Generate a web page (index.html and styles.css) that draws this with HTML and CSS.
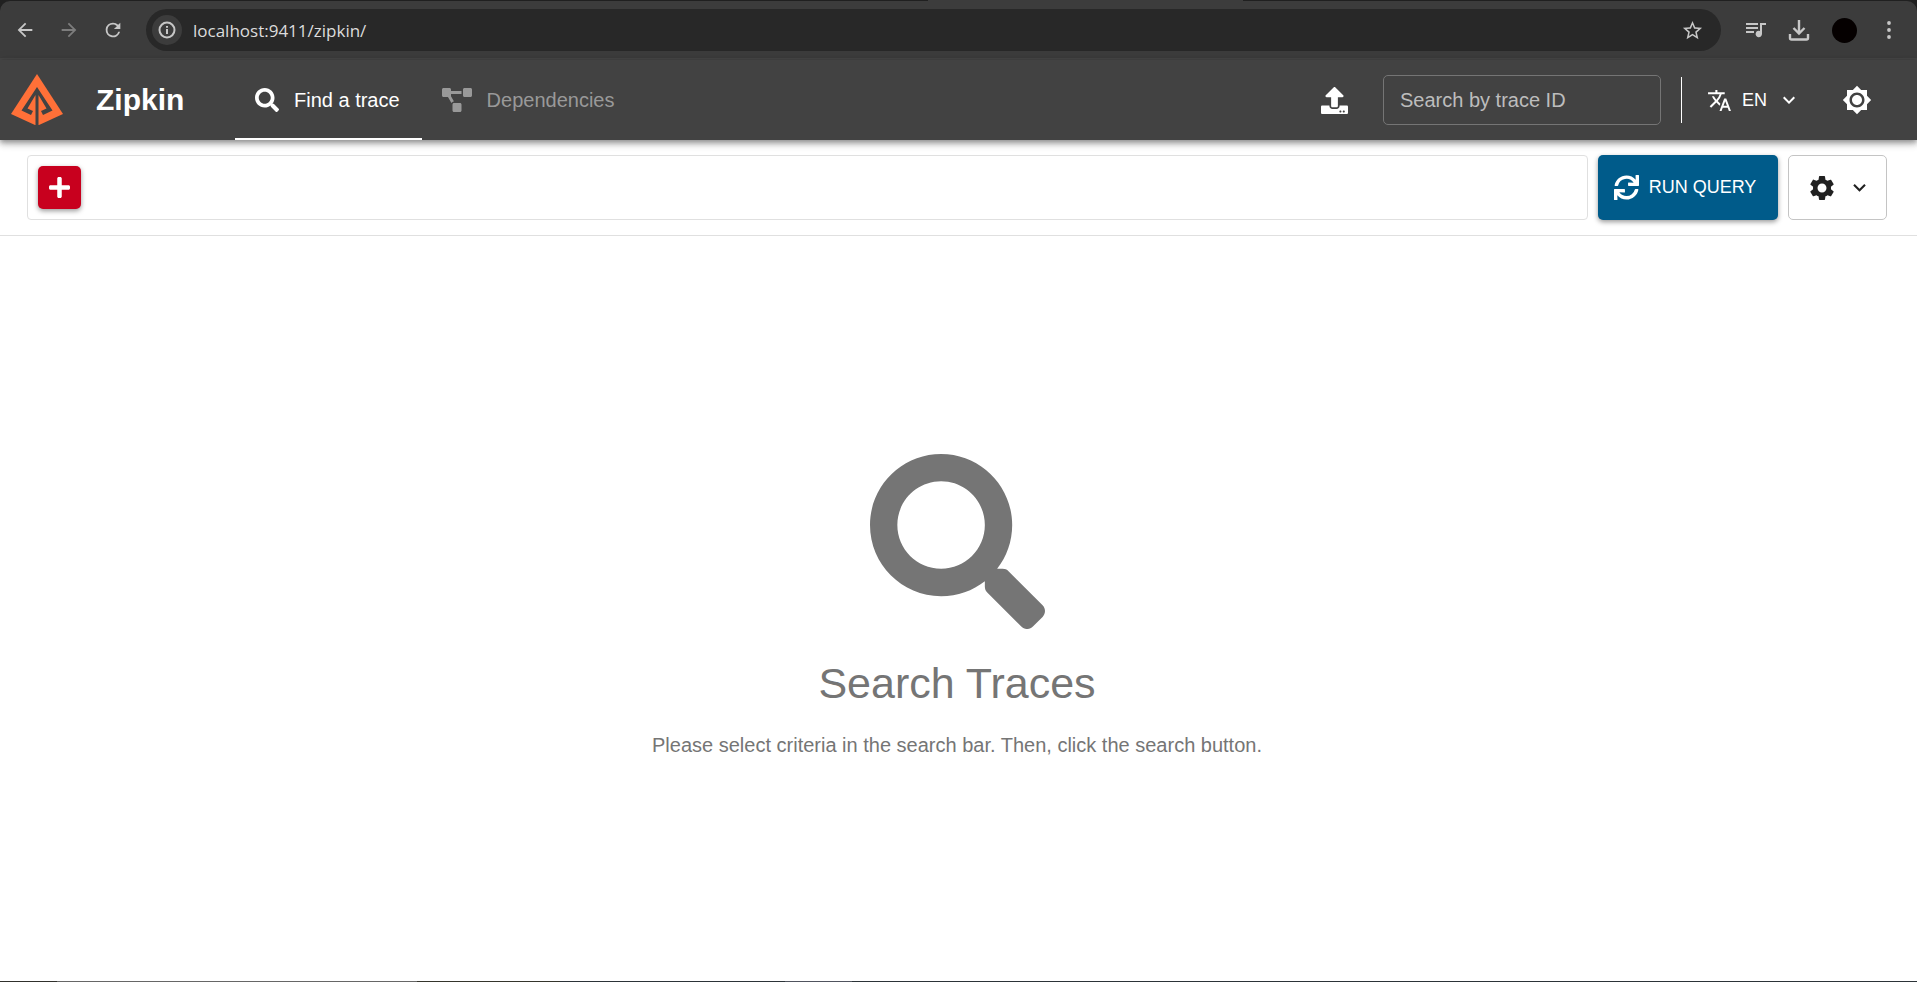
FILE: index.html
```html
<!DOCTYPE html>
<html lang="en">
<head>
<meta charset="utf-8">
<title>Zipkin</title>
<link rel="stylesheet" href="styles.css">
</head>
<body>
<div class="browser">
  <div class="browser-bar">
    <button class="nav-btn" aria-label="Back"><svg width="22" height="22" viewBox="0 0 24 24" fill="currentColor"><path d="M20 11H7.830l5.590-5.590L12 4l-8 8 8 8 1.410-1.410L7.830 13H20z"/></svg></button>
    <button class="nav-btn nav-off" aria-label="Forward"><svg width="22" height="22" viewBox="0 0 24 24" fill="currentColor"><path d="M12 4l-1.410 1.410L16.170 11H4v2h12.170l-5.580 5.590L12 20l8-8z"/></svg></button>
    <button class="nav-btn" aria-label="Reload"><svg width="22" height="22" viewBox="0 0 24 24" fill="currentColor"><path d="M17.650 6.350A7.960 7.960 0 0 0 12 4a8 8 0 1 0 7.730 10h-2.080A6 6 0 1 1 12 6c1.660 0 3.140.69 4.220 1.780L13 11h7V4z"/></svg></button>
    <div class="address">
      <button class="info" aria-label="View site information"><svg width="18" height="18" viewBox="0 0 18 18" fill="none" stroke="currentColor" stroke-width="2"><circle cx="9" cy="9" r="7.500"/><path d="M9 8v5M9 5v1.800"/></svg></button>
      <input class="url" type="text" value="localhost:9411/zipkin/" aria-label="Address">
      <button class="star" aria-label="Bookmark"><svg width="23" height="23" viewBox="0 0 24 24" fill="currentColor"><path d="M22 9.240l-7.190-.62L12 2 9.190 8.630 2 9.240l5.460 4.730L5.820 21 12 17.270 18.180 21l-1.630-7.030zM12 15.400l-3.760 2.270 1-4.280-3.320-2.880 4.380-.38L12 6.100l1.710 4.040 4.380.38-3.320 2.880 1 4.280z"/></svg></button>
    </div>
    <div class="browser-tools">
      <button aria-label="Media"><svg width="20" height="15" viewBox="0 0 20 15" fill="currentColor"><path d="M0 0h12v2H0zM0 4h12v2H0zM0 8h8v2H0zM14 0h6v2h-4v9a3.200 3.200 0 1 1-2-3z"/></svg></button>
      <button aria-label="Downloads"><svg width="22" height="21" viewBox="0 0 22 21" fill="none" stroke="currentColor" stroke-width="2.400"><path d="M11 0v13M5.500 8l5.500 5.500L16.500 8M2 14v4q0 1.500 1.500 1.500h15q1.500 0 1.500-1.500v-4"/></svg></button>
      <button class="profile" aria-label="Profile"></button>
      <button class="menu" aria-label="Menu"><svg width="4" height="18" viewBox="0 0 4 18" fill="currentColor"><circle cx="2" cy="2" r="1.900"/><circle cx="2" cy="9" r="1.900"/><circle cx="2" cy="16" r="1.900"/></svg></button>
    </div>
  </div>
</div>

<header class="app-bar">
  <a class="brand" href="#">
    <svg width="52" height="52" viewBox="0 0 52 52"><path fill="#ff7038" d="M26 0L52 40L28 51H24L0 40Z"/><path fill="#424242" d="M26 13L10.500 36.500L20 41L22 37L16.500 34.500L24.500 21V52H27.500V21L35.500 34.500L30 37L32 41L41.500 36.500Z"/></svg>
    <span class="brand-name">Zipkin</span>
  </a>
  <nav class="tabs">
    <a class="tab tab-active" href="#"><svg width="24" height="24" viewBox="0 0 512 512" fill="currentColor"><path d="M505 442.700L405.300 343c-4.500-4.500-10.600-7-17-7H372c27.600-35.300 44-79.700 44-128C416 93.100 322.900 0 208 0S0 93.100 0 208s93.100 208 208 208c48.300 0 92.700-16.400 128-44v16.300c0 6.400 2.500 12.500 7 17l99.700 99.700c9.400 9.400 24.600 9.400 33.900 0l28.300-28.300c9.400-9.400 9.400-24.600.1-34zM208 336c-70.700 0-128-57.200-128-128 0-70.700 57.200-128 128-128 70.700 0 128 57.200 128 128 0 70.700-57.200 128-128 128z"/></svg>Find a trace</a>
    <a class="tab" href="#"><svg width="30" height="24" viewBox="0 0 640 512" fill="currentColor"><path d="M384 320H256c-17.670 0-32 14.330-32 32v128c0 17.670 14.330 32 32 32h128c17.670 0 32-14.330 32-32V352c0-17.670-14.330-32-32-32zM192 32c0-17.670-14.330-32-32-32H32C14.330 0 0 14.330 0 32v128c0 17.670 14.330 32 32 32h95.720l73.160 128.040C211.980 300.980 232.400 288 256 288h.28L192 175.510V128h224V64H192V32zM608 0H480c-17.670 0-32 14.330-32 32v128c0 17.670 14.330 32 32 32h128c17.670 0 32-14.330 32-32V32c0-17.670-14.330-32-32-32z"/></svg>Dependencies</a>
  </nav>
  <div class="app-tools">
    <button class="upload" aria-label="Upload JSON"><svg width="27" height="27" viewBox="0 0 512 512" fill="currentColor"><path d="M296 384h-80c-13.300 0-24-10.700-24-24V192h-87.700c-17.800 0-26.700-21.500-14.100-34.100L242.300 5.700c7.500-7.500 19.800-7.500 27.300 0l152.200 152.200c12.600 12.600 3.700 34.100-14.100 34.100H320v168c0 13.300-10.700 24-24 24zm216-8v112c0 13.300-10.700 24-24 24H24c-13.300 0-24-10.700-24-24V376c0-13.300 10.700-24 24-24h136v8c0 30.900 25.100 56 56 56h80c30.900 0 56-25.100 56-56v-8h136c13.300 0 24 10.700 24 24zm-124 88c0-11-9-20-20-20s-20 9-20 20 9 20 20 20 20-9 20-20zm64 0c0-11-9-20-20-20s-20 9-20 20 9 20 20 20 20-9 20-20z"/></svg></button>
    <input class="trace-id" type="text" placeholder="Search by trace ID" aria-label="Search by trace ID">
    <div class="divider"></div>
    <button class="language"><svg width="25" height="25" viewBox="0 0 24 24" fill="currentColor"><path d="M12.870 15.070l-2.540-2.510.03-.03A17.520 17.520 0 0 0 14.070 6H17V4h-7V2H8v2H1v1.990h11.170C11.500 7.920 10.440 9.750 9 11.350 8.070 10.320 7.300 9.190 6.690 8h-2c.73 1.630 1.730 3.170 2.980 4.560l-5.090 5.020L4 19l5-5 3.110 3.110.76-2.040zM18.500 10h-2L12 22h2l1.120-3h4.750L21 22h2l-4.500-12zm-2.620 7l1.620-4.330L19.120 17h-3.240z"/></svg><span>EN</span><svg width="24" height="24" viewBox="0 0 24 24" fill="currentColor"><path d="M7.410 8.590L12 13.170l4.590-4.580L18 10l-6 6-6-6z"/></svg></button>
    <button class="theme" aria-label="Toggle theme"><svg width="30" height="30" viewBox="0 0 24 24" fill="currentColor"><path d="M20 8.690V4h-4.690L12 .69 8.690 4H4v4.690L.69 12 4 15.310V20h4.690L12 23.310 15.310 20H20v-4.690L23.310 12 20 8.690zM12 18c-3.310 0-6-2.690-6-6s2.690-6 6-6 6 2.690 6 6-2.690 6-6 6zm0-10c-2.210 0-4 1.790-4 4s1.790 4 4 4 4-1.790 4-4-1.790-4-4-4z"/></svg></button>
  </div>
</header>

<section class="query-bar">
  <div class="criteria">
    <button class="add" aria-label="Add criterion"><svg width="21" height="21" viewBox="0 0 448 448" fill="currentColor"><path d="M416 176H272V32c0-17.670-14.330-32-32-32h-32c-17.670 0-32 14.330-32 32v144H32c-17.670 0-32 14.330-32 32v32c0 17.670 14.330 32 32 32h144v144c0 17.670 14.330 32 32 32h32c17.670 0 32-14.330 32-32V272h144c17.670 0 32-14.330 32-32v-32c0-17.670-14.330-32-32-32z"/></svg></button>
  </div>
  <button class="run"><svg width="25" height="25" viewBox="0 0 512 512" fill="currentColor"><path d="M440.650 12.570l4 82.770A247.160 247.160 0 0 0 255.830 8C134.730 8 33.910 94.920 12.290 209.820A12 12 0 0 0 24.090 224h49.050a12 12 0 0 0 11.670-9.260 175.910 175.910 0 0 1 317-56.940l-101.460-4.860a12 12 0 0 0-12.570 12v47.410a12 12 0 0 0 12 12H500a12 12 0 0 0 12-12V12a12 12 0 0 0-12-12h-47.370a12 12 0 0 0-11.980 12.570zM255.830 432a175.610 175.610 0 0 1-146-77.800l101.800 4.870a12 12 0 0 0 12.570-12v-47.400a12 12 0 0 0-12-12H12a12 12 0 0 0-12 12V500a12 12 0 0 0 12 12h47.350a12 12 0 0 0 12-12.600l-4.150-82.570A247.170 247.170 0 0 0 255.830 504c121.110 0 221.930-86.920 243.550-201.820a12 12 0 0 0-11.800-14.180h-49.050a12 12 0 0 0-11.670 9.260A175.860 175.860 0 0 1 255.830 432z"/></svg>RUN QUERY</button>
  <button class="settings" aria-label="Settings"><svg width="30" height="30" viewBox="0 0 24 24" fill="currentColor"><path d="M19.140 12.940c.04-.3.060-.61.060-.94 0-.32-.02-.64-.07-.94l2.030-1.580c.18-.14.23-.41.120-.61l-1.920-3.320c-.12-.22-.37-.29-.59-.22l-2.390.96c-.5-.38-1.030-.7-1.620-.94l-.36-2.540c-.04-.24-.24-.41-.48-.41h-3.840c-.24 0-.43.17-.47.41l-.36 2.540c-.59.24-1.130.57-1.620.94l-2.390-.96c-.22-.08-.47 0-.59.22L2.740 8.870c-.12.21-.08.47.12.61l2.030 1.580c-.05.3-.09.63-.09.94s.02.64.07.94l-2.030 1.580c-.18.14-.23.41-.12.61l1.920 3.320c.12.22.37.29.59.22l2.390-.96c.5.38 1.030.7 1.620.94l.36 2.540c.05.24.24.41.48.41h3.840c.24 0 .44-.17.47-.41l.36-2.540c.59-.24 1.130-.56 1.620-.94l2.390.96c.22.08.47 0 .59-.22l1.920-3.320c.12-.22.070-.47-.12-.61l-2.010-1.580zM12 15.600c-1.980 0-3.600-1.620-3.600-3.600s1.620-3.600 3.600-3.600 3.600 1.620 3.600 3.600-1.620 3.600-3.600 3.600z"/></svg><svg width="25" height="25" viewBox="0 0 24 24" fill="currentColor"><path d="M7.410 8.590L12 13.170l4.590-4.580L18 10l-6 6-6-6z"/></svg></button>
</section>

<main class="empty">
  <svg width="175" height="175" viewBox="0 0 512 512" fill="currentColor"><path d="M505 442.700L405.300 343c-4.500-4.500-10.600-7-17-7H372c27.600-35.300 44-79.700 44-128C416 93.100 322.900 0 208 0S0 93.100 0 208s93.100 208 208 208c48.300 0 92.700-16.400 128-44v16.300c0 6.400 2.500 12.500 7 17l99.700 99.700c9.400 9.400 24.600 9.400 33.900 0l28.300-28.300c9.400-9.400 9.400-24.600.1-34zM208 336c-70.700 0-128-57.200-128-128 0-70.700 57.200-128 128-128 70.700 0 128 57.200 128 128 0 70.700-57.200 128-128 128z"/></svg>
  <h1>Search Traces</h1>
  <p>Please select criteria in the search bar. Then, click the search button.</p>
</main>
<footer class="desktop-edge"></footer>
</body>
</html>
```

FILE: styles.css
```css
* { box-sizing: border-box; }

body {
  margin: 0;
  min-height: 100vh;
  display: flex;
  flex-direction: column;
  background: #fff;
  font-family: "Liberation Sans", Arial, sans-serif;
  font-size: 20px;
}

button {
  display: flex;
  align-items: center;
  justify-content: center;
  margin: 0;
  padding: 0;
  border: 0;
  background: none;
  color: inherit;
  font: inherit;
}

input { font: inherit; }
svg { display: block; flex: none; }
a { color: inherit; text-decoration: none; }

.browser {
  padding-top: 1px;
  background: linear-gradient(90deg, #202020 0 928px, #3c3c3c 928px 1243px, #202020 1243px);
}

.browser-bar {
  display: flex;
  align-items: center;
  height: 59px;
  padding: 1px 26px 0 14px;
  border-bottom: 2px solid #464646;
  border-radius: 10px 10px 0 0;
  background: #3c3c3c;
  color: #c7c7c7;
}

.nav-btn { width: 22px; margin-right: 22px; }
.nav-off { color: #7d7d7d; }

.address {
  flex: 1;
  display: flex;
  align-items: center;
  height: 42px;
  margin-right: 25px;
  padding: 0 17px 0 6px;
  border-radius: 21px;
  background: #282828;
}

.info {
  width: 30px;
  height: 30px;
  border-radius: 50%;
  background: #3c3c3c;
}

.url {
  flex: 1;
  margin-left: 11px;
  padding: 0;
  border: 0;
  outline: 0;
  background: none;
  color: #dcdcdc;
  font-family: "Open Sans", "Noto Sans", sans-serif;
  font-size: 17px;
}

.browser-tools { display: flex; align-items: center; gap: 22px; }
.profile { width: 25px; height: 25px; border-radius: 50%; background: #050000; }
.menu { margin-left: 8px; }

.app-bar {
  position: relative;
  display: flex;
  height: 80px;
  background: #424242;
  color: #fff;
  box-shadow: 0 2px 5px rgba(0, 0, 0, .3), 0 5px 6px rgba(0, 0, 0, .14), 0 1px 12px rgba(0, 0, 0, .12);
}

.brand {
  display: flex;
  align-items: center;
  gap: 33px;
  width: 235px;
  padding-left: 11px;
}

.brand-name { font-size: 30px; font-weight: bold; }
.tabs { display: flex; }

.tab {
  display: flex;
  align-items: center;
  gap: 15px;
  padding: 0 22px 0 20px;
  border-top: 2px solid transparent;
  border-bottom: 2px solid transparent;
  color: #999;
}

.tab-active { border-bottom-color: #fff; color: #fff; }

.app-tools {
  display: flex;
  align-items: center;
  margin-left: auto;
  padding-right: 45px;
}

.upload { margin-right: 35px; }

.trace-id {
  width: 278px;
  height: 50px;
  padding: 0 16px;
  border: 1px solid #757575;
  border-radius: 5px;
  background: none;
  color: #fff;
}

.trace-id::placeholder { color: #bdbdbd; opacity: 1; }
.divider { width: 1px; height: 46px; margin: 0 25px 0 20px; background: #fff; }
.language { gap: 10px; font-size: 18px; }
.theme { margin-left: 41px; }

.query-bar {
  display: flex;
  gap: 10px;
  padding: 15px 30px 15px 27px;
  border-bottom: 1px solid #e0e0e0;
}

.criteria {
  flex: 1;
  display: flex;
  align-items: center;
  height: 65px;
  padding: 0 10px;
  border: 1px solid #e0e0e0;
  border-radius: 4px;
}

.add, .run { border-radius: 5px; color: #fff; box-shadow: 0 2px 5px rgba(0, 0, 0, .4); }
.add { width: 43px; height: 43px; background: #c8001e; }
.run { width: 180px; gap: 10px; padding-right: 6px; background: #005b8a; font-size: 18px; }

.settings {
  width: 99px;
  gap: 10px;
  padding-left: 4px;
  border: 1px solid #c4c4c4;
  border-radius: 5px;
  color: #212121;
}

.empty {
  flex: 1;
  display: flex;
  flex-direction: column;
  align-items: center;
  justify-content: center;
  padding: 0 3px 3px 0;
  color: #757575;
}

.empty h1 { margin: 28px 0 21px; font-size: 43px; line-height: 52px; font-weight: normal; }
.empty p { margin: 0; line-height: 30px; }

.desktop-edge {
  height: 1px;
  background: linear-gradient(90deg, #30302c 0 57px, #666 57px 417px, #35352c 417px 560px, #2c3338 560px 785px, #50545e 785px 852px, #2c3338 852px);
}
```
